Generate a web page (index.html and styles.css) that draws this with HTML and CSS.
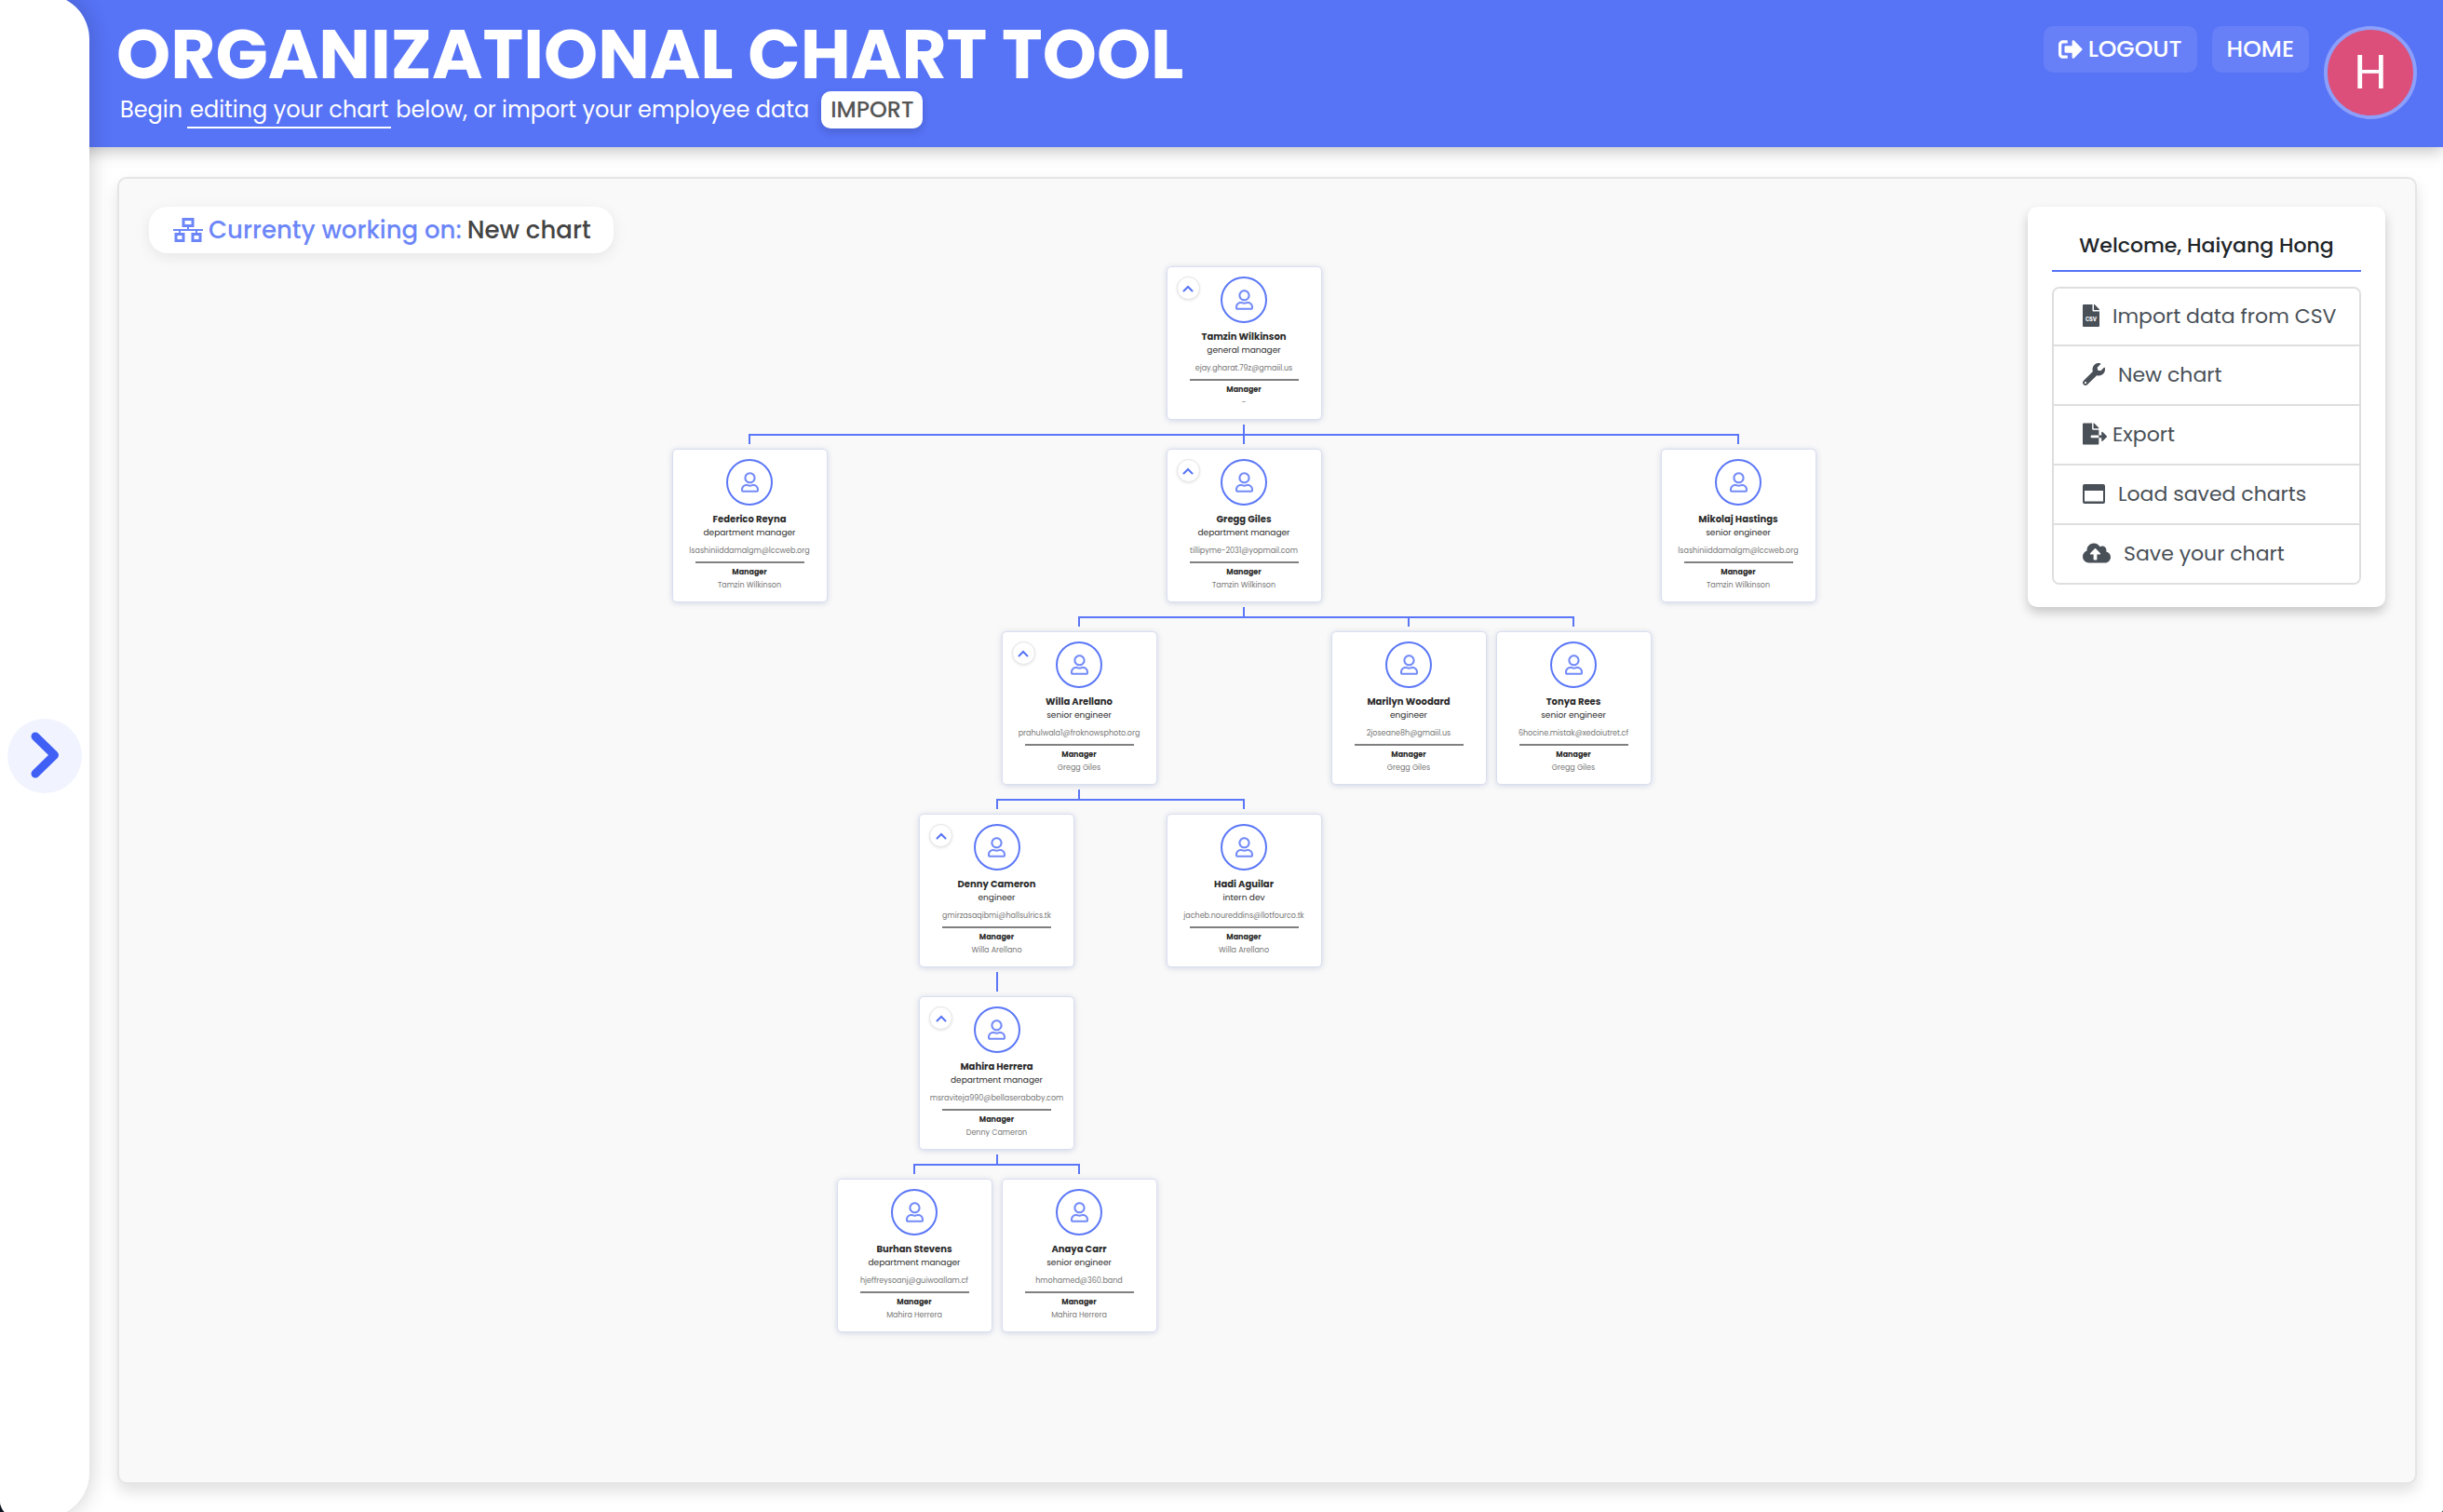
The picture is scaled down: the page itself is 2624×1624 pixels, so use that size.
FILE: index.html
```html
<!DOCTYPE html>
<html lang="en">
<head>
<meta charset="utf-8">
<meta name="viewport" content="width=device-width, initial-scale=1">
<title>Organizational Chart Tool</title>
<link rel="stylesheet" href="styles.css">
</head>
<body>
<svg class="sprite" aria-hidden="true">
  <symbol id="user" viewBox="0 0 448 512"><path d="M313.6 304c-28.7 0-42.5 16-89.6 16-47.1 0-60.8-16-89.6-16C60.2 304 0 364.2 0 438.4V464c0 26.5 21.5 48 48 48h352c26.5 0 48-21.5 48-48v-25.6c0-74.2-60.2-134.4-134.4-134.4zM400 464H48v-25.6c0-47.6 38.8-86.4 86.4-86.4 14.6 0 38.3 16 89.6 16 51.7 0 74.9-16 89.6-16 47.6 0 86.4 38.8 86.4 86.4V464zM224 288c79.5 0 144-64.5 144-144S303.5 0 224 0 80 64.5 80 144s64.5 144 144 144zm0-240c52.9 0 96 43.1 96 96s-43.1 96-96 96-96-43.1-96-96 43.1-96 96-96z"/></symbol>
  <symbol id="up" viewBox="0 0 12 8"><path d="M1.500 6.500 6 2l4.500 4.500" fill="none" stroke="currentColor" stroke-width="2" stroke-linecap="round"/></symbol>
</svg>
<div class="page">
  <aside class="sidebar">
    <button class="sidebar-toggle" type="button" aria-label="Open sidebar">
      <svg viewBox="0 0 30 50" width="30" height="50"><path d="M5 5 25.500 25 5 45" fill="none" stroke="currentColor" stroke-width="9" stroke-linecap="round" stroke-linejoin="round"/></svg>
    </button>
  </aside>

  <header class="header">
    <div class="heading">
      <h1>ORGANIZATIONAL CHART TOOL</h1>
      <p class="subtitle">Begin <a href="#chart" class="edit-link">editing your chart</a> below, or import your employee data <button type="button" class="import">IMPORT</button></p>
    </div>
    <nav class="nav">
      <a href="#logout" class="nav-link"><svg viewBox="0 0 512 512" width="26" height="26" fill="currentColor"><path d="M497 273L329 441c-15 15-41 4.500-41-17v-96H152c-13.300 0-24-10.700-24-24v-96c0-13.300 10.700-24 24-24h136V88c0-21.400 25.900-32 41-17l168 168c9.300 9.400 9.300 24.600 0 34zM192 436v-40c0-6.600-5.400-12-12-12H96c-17.700 0-32-14.300-32-32V160c0-17.700 14.300-32 32-32h84c6.600 0 12-5.400 12-12V76c0-6.600-5.400-12-12-12H96c-53 0-96 43-96 96v192c0 53 43 96 96 96h84c6.600 0 12-5.400 12-12z"/></svg>LOGOUT</a>
      <a href="#home" class="nav-link">HOME</a>
      <span class="avatar">H</span>
    </nav>
  </header>

  <main class="main">
    <section class="canvas" id="chart">
      <h2 class="current">
        <svg viewBox="0 0 32 26" width="32" height="26" fill="none" stroke="currentColor" stroke-width="3"><rect x="11" y="1.500" width="10" height="7"/><rect x="3" y="17.500" width="8" height="7"/><rect x="21" y="17.500" width="8" height="7"/><path d="M0 13h32M16 9v4M7 13v4M25 13v4" stroke-width="2"/></svg>
        <span>Currenty working on:</span> <strong>New chart</strong>
      </h2>

      <ul class="tree">
        <li>
          <article class="card"><button type="button" class="collapse" aria-label="Collapse"><svg><use href="#up"/></svg></button><span class="photo"><svg><use href="#user"/></svg></span><h3>Tamzin Wilkinson</h3><p class="role">general manager</p><p class="email">ejay.gharat.79z@gmaiil.us</p><hr><h4>Manager</h4><p class="boss">-</p></article>
          <ul>
            <li><article class="card"><span class="photo"><svg><use href="#user"/></svg></span><h3>Federico Reyna</h3><p class="role">department manager</p><p class="email">lsashiniiddamalgm@lccweb.org</p><hr><h4>Manager</h4><p class="boss">Tamzin Wilkinson</p></article></li>
            <li>
              <article class="card"><button type="button" class="collapse" aria-label="Collapse"><svg><use href="#up"/></svg></button><span class="photo"><svg><use href="#user"/></svg></span><h3>Gregg Giles</h3><p class="role">department manager</p><p class="email">tillipyme-2031@yopmail.com</p><hr><h4>Manager</h4><p class="boss">Tamzin Wilkinson</p></article>
              <ul>
                <li>
                  <article class="card"><button type="button" class="collapse" aria-label="Collapse"><svg><use href="#up"/></svg></button><span class="photo"><svg><use href="#user"/></svg></span><h3>Willa Arellano</h3><p class="role">senior engineer</p><p class="email">prahulwala1@froknowsphoto.org</p><hr><h4>Manager</h4><p class="boss">Gregg Giles</p></article>
                  <ul>
                    <li>
                      <article class="card"><button type="button" class="collapse" aria-label="Collapse"><svg><use href="#up"/></svg></button><span class="photo"><svg><use href="#user"/></svg></span><h3>Denny Cameron</h3><p class="role">engineer</p><p class="email">gmirzasaqibmi@hallsulrics.tk</p><hr><h4>Manager</h4><p class="boss">Willa Arellano</p></article>
                      <ul>
                        <li>
                          <article class="card"><button type="button" class="collapse" aria-label="Collapse"><svg><use href="#up"/></svg></button><span class="photo"><svg><use href="#user"/></svg></span><h3>Mahira Herrera</h3><p class="role">department manager</p><p class="email">msraviteja990@bellaserababy.com</p><hr><h4>Manager</h4><p class="boss">Denny Cameron</p></article>
                          <ul>
                            <li><article class="card"><span class="photo"><svg><use href="#user"/></svg></span><h3>Burhan Stevens</h3><p class="role">department manager</p><p class="email">hjeffreysoanj@guiwoallam.cf</p><hr><h4>Manager</h4><p class="boss">Mahira Herrera</p></article></li>
                            <li><article class="card"><span class="photo"><svg><use href="#user"/></svg></span><h3>Anaya Carr</h3><p class="role">senior engineer</p><p class="email">hmohamed@360.band</p><hr><h4>Manager</h4><p class="boss">Mahira Herrera</p></article></li>
                          </ul>
                        </li>
                      </ul>
                    </li>
                    <li><article class="card"><span class="photo"><svg><use href="#user"/></svg></span><h3>Hadi Aguilar</h3><p class="role">intern dev</p><p class="email">jacheb.noureddins@llotfourco.tk</p><hr><h4>Manager</h4><p class="boss">Willa Arellano</p></article></li>
                  </ul>
                </li>
                <li><article class="card"><span class="photo"><svg><use href="#user"/></svg></span><h3>Marilyn Woodard</h3><p class="role">engineer</p><p class="email">2joseane8h@gmaiil.us</p><hr><h4>Manager</h4><p class="boss">Gregg Giles</p></article></li>
                <li><article class="card"><span class="photo"><svg><use href="#user"/></svg></span><h3>Tonya Rees</h3><p class="role">senior engineer</p><p class="email">6hocine.mistak@xedoiutret.cf</p><hr><h4>Manager</h4><p class="boss">Gregg Giles</p></article></li>
              </ul>
            </li>
            <li><article class="card"><span class="photo"><svg><use href="#user"/></svg></span><h3>Mikolaj Hastings</h3><p class="role">senior engineer</p><p class="email">lsashiniiddamalgm@lccweb.org</p><hr><h4>Manager</h4><p class="boss">Tamzin Wilkinson</p></article></li>
          </ul>
        </li>
      </ul>

      <aside class="menu">
        <h2>Welcome, Haiyang Hong</h2>
        <div class="menu-list">
          <button type="button"><svg viewBox="0 0 384 512" width="18" height="24"><path fill="currentColor" d="M224 136V0H24C10.700 0 0 10.700 0 24v464c0 13.300 10.700 24 24 24h336c13.300 0 24-10.700 24-24V160H248c-13.200 0-24-10.800-24-24zM384 122v6H256V0h6c6 0 12 2.500 17 7l98 98c4.500 4.500 7 10.600 7 17z"/><text x="192" y="376" class="csv">CSV</text></svg>Import data from CSV</button>
          <button type="button"><svg viewBox="0 0 512 512" width="24" height="24" fill="currentColor"><path d="M507.730 109.100c-2.240-9.030-13.540-12.090-20.120-5.510l-74.360 74.360-67.880-11.310-11.310-67.880 74.360-74.360c6.620-6.620 3.430-17.900-5.660-20.160-47.380-11.740-99.550.91-136.580 37.930-39.640 39.640-50.550 97.100-34.050 147.200L18.740 402.760c-24.990 24.990-24.990 65.510 0 90.500 24.990 24.990 65.510 24.990 90.500 0l213.210-213.210c50.120 16.710 107.470 5.680 147.370-34.220 37.070-37.070 49.700-89.320 37.910-136.730zM64 472c-13.250 0-24-10.750-24-24 0-13.260 10.750-24 24-24s24 10.740 24 24c0 13.250-10.750 24-24 24z"/></svg>New chart</button>
          <button type="button" class="tight"><svg viewBox="0 0 576 512" width="26" height="24" fill="currentColor"><path d="M384 121.900c0-6.300-2.500-12.400-7-16.900L279.100 7c-4.500-4.500-10.600-7-17-7H256v128h128zM571 308l-95.700-96.400c-10.100-10.100-27.400-3-27.400 11.300V288h-64v64h64v65.200c0 14.300 17.300 21.400 27.400 11.300L571 332c6.600-6.600 6.600-17.400 0-24zm-379 28v-32c0-8.800 7.200-16 16-16h176V160H248c-13.200 0-24-10.800-24-24V0H24C10.700 0 0 10.700 0 24v464c0 13.300 10.700 24 24 24h336c13.300 0 24-10.700 24-24V352H208c-8.800 0-16-7.200-16-16z"/></svg>Export</button>
          <button type="button"><svg viewBox="0 0 24 24" width="24" height="24" fill="currentColor"><path fill-rule="evenodd" d="M2 2h20a2 2 0 0 1 2 2v17a2 2 0 0 1-2 2H2a2 2 0 0 1-2-2V4a2 2 0 0 1 2-2zM2 9v11.500h20V9z"/></svg>Load saved charts</button>
          <button type="button"><svg viewBox="0 0 640 512" width="30" height="24" fill="currentColor"><path d="M537.600 226.600c4.100-10.700 6.400-22.400 6.400-34.600 0-53-43-96-96-96-19.700 0-38.100 6-53.300 16.200C367 64.200 315.300 32 256 32c-88.400 0-160 71.600-160 160 0 2.700.1 5.400.2 8.100C40.200 219.800 0 273.200 0 336c0 79.500 64.500 144 144 144h368c70.700 0 128-57.300 128-128 0-61.900-44-113.600-102.400-125.400zM393.400 288H328v112c0 8.800-7.200 16-16 16h-48c-8.800 0-16-7.200-16-16V288h-65.400c-14.300 0-21.400-17.200-11.300-27.400l105.400-105.400c6.200-6.200 16.400-6.200 22.600 0l105.400 105.400c10.100 10.100 2.900 27.400-11.300 27.400z"/></svg>Save your chart</button>
        </div>
      </aside>
    </section>
  </main>
</div>
</body>
</html>
```
FILE: styles.css
```css
:root {
  --blue: #5773f6;
  --line: #5b77f7;
}

* {
  box-sizing: border-box;
}

body {
  margin: 0;
  background: #0d1420;
  color: #212529;
  font-family: Poppins, Inter, sans-serif;
}

h1, h2, h3, h4, p, ul {
  margin: 0;
  padding: 0;
}

button {
  font: inherit;
  border: 0;
  cursor: pointer;
}

a {
  color: inherit;
  text-decoration: none;
}

.sprite {
  display: none;
}

.page {
  display: flex;
  flex-direction: column;
  min-height: 100vh;
  background: #fff;
  border-radius: 0 0 2px 12px;
  overflow: hidden;
}

/* Collapsed drawer over the left edge */
.sidebar {
  position: fixed;
  inset: -6px auto -6px 0;
  z-index: 2;
  display: flex;
  align-items: center;
  justify-content: center;
  width: 96px;
  background: #fff;
  border-radius: 0 48px 48px 18px;
  box-shadow: 0 0 24px rgba(0, 0, 0, 0.2);
}

.sidebar-toggle {
  display: grid;
  place-items: center;
  width: 80px;
  height: 80px;
  padding: 0 0 3px;
  border-radius: 50%;
  background: #f1f4fe;
  color: #405ff5;
}

/* Header */
.header {
  display: flex;
  justify-content: space-between;
  gap: 32px;
  min-height: 158px;
  padding: 28px 28px 20px 125px;
  background: var(--blue);
  color: #fff;
  box-shadow: 0 4px 16px rgba(0, 0, 0, 0.25);
}

.heading h1 {
  font-size: 74px;
  line-height: 60px;
  font-weight: 700;
}

.subtitle {
  display: flex;
  align-items: center;
  gap: 5px;
  margin-top: 10px;
  padding-left: 4px;
  font-size: 24px;
  line-height: 36px;
}

.edit-link {
  padding: 2px 3px 0;
  border-bottom: 2px solid #fff;
}

.import {
  height: 40px;
  margin-left: 8px;
  padding: 0 10px;
  border-radius: 10px;
  background: #fff;
  color: #555;
  font-weight: 500;
  box-shadow: 0 4px 8px rgba(0, 0, 0, 0.15);
}

.nav {
  display: flex;
  align-items: flex-start;
  gap: 16px;
}

.nav-link {
  display: flex;
  align-items: center;
  gap: 6px;
  height: 50px;
  padding: 0 16px;
  border-radius: 10px;
  background: #6780f8;
  font-size: 25px;
  font-weight: 500;
}

.avatar {
  display: grid;
  place-items: center;
  width: 100px;
  height: 100px;
  border: 4px solid #8b9ffb;
  border-radius: 50%;
  background: #dc4f7a;
  font: 50px Roboto, sans-serif;
}

/* Work area */
.main {
  display: flex;
  flex: 1;
  padding: 32px 28px 30px 126px;
}

.canvas {
  flex: 1;
  display: grid;
  align-items: start;
  padding: 30px 32px;
  border: 2px solid #e5e5e5;
  border-radius: 10px;
  background: #f9f9f9;
  box-shadow: 0 8px 16px rgba(0, 0, 0, 0.12);
}

.canvas > * {
  grid-area: 1 / 1;
}

.current {
  justify-self: start;
  display: flex;
  align-items: center;
  gap: 6px;
  height: 50px;
  padding: 0 24px 0 26px;
  border-radius: 20px;
  background: #fff;
  color: #6c86f8;
  font-size: 26px;
  font-weight: 500;
  box-shadow: 0 4px 16px rgba(0, 0, 0, 0.08);
}

.current strong {
  color: #444;
  font-weight: 500;
}

/* Account menu */
.menu {
  justify-self: end;
  width: 384px;
  padding: 24px 26px;
  border-radius: 10px;
  background: #fff;
  box-shadow: 0 6px 12px rgba(0, 0, 0, 0.2);
}

.menu h2 {
  margin-bottom: 16px;
  padding-bottom: 8px;
  border-bottom: 2px solid var(--blue);
  font-size: 22px;
  line-height: 36px;
  font-weight: 500;
  text-align: center;
}

.menu-list {
  display: flex;
  flex-direction: column;
  border: 2px solid #dedede;
  border-radius: 8px;
  overflow: hidden;
}

.menu-list button {
  display: flex;
  align-items: center;
  gap: 14px;
  height: 64px;
  padding: 0 16px 2px 31px;
  border-top: 2px solid #dedede;
  background: #fff;
  color: #495057;
  font-size: 22px;
  white-space: nowrap;
}

.menu-list button:first-child {
  height: 60px;
  border-top: 0;
}

.menu-list .tight {
  gap: 6px;
}

.menu-list svg {
  flex: none;
}

.csv {
  fill: #fff;
  font: 800 120px Inter, sans-serif;
  text-anchor: middle;
}

/* Organization tree */
.tree,
.tree ul {
  display: flex;
  justify-content: center;
  list-style: none;
}

.tree {
  justify-self: center;
  padding: 64px 50px 0 0;
}

.tree li {
  position: relative;
  display: flex;
  flex-direction: column;
  align-items: center;
}

.tree ul {
  position: relative;
  padding-top: 15px;
}

.tree ul > li {
  padding-top: 16px;
}

.tree ul::before,
.tree ul > li::before,
.tree ul > li::after {
  content: "";
  position: absolute;
  background: var(--line);
}

.tree ul::before {
  top: 5px;
  left: calc(50% - 1px);
  width: 2px;
  height: 11px;
}

.tree ul > li::before {
  top: 0;
  left: calc(50% - 1px);
  width: 2px;
  height: 11px;
}

.tree ul > li::after {
  top: 0;
  left: 0;
  right: 0;
  height: 2px;
}

.tree ul > li:first-child::after {
  left: calc(50% - 1px);
}

.tree ul > li:last-child::after {
  right: calc(50% - 1px);
}

.tree ul > li:only-child::after {
  display: none;
}

.card {
  position: relative;
  display: flex;
  flex-direction: column;
  align-items: center;
  width: 167px;
  height: 165px;
  margin: 0 5px;
  padding-top: 10px;
  border: 1px solid #d9dff0;
  border-radius: 5px;
  background: #fff;
  color: #2b2b2b;
  line-height: 14px;
  box-shadow: 0 1px 6px rgba(70, 90, 160, 0.22);
  white-space: nowrap;
}

.photo {
  display: grid;
  place-items: center;
  width: 50px;
  height: 50px;
  margin-bottom: 8px;
  border: 2px solid var(--line);
  border-radius: 50%;
}

.photo svg {
  width: 19px;
  height: 22px;
  fill: #738bf8;
}

.collapse {
  position: absolute;
  top: 10px;
  left: 10px;
  display: grid;
  place-items: center;
  width: 25px;
  height: 25px;
  padding: 0;
  border: 1px solid #e5e5e5;
  border-radius: 50%;
  background: #fff;
  color: var(--blue);
  box-shadow: 0 1px 3px rgba(0, 0, 0, 0.1);
}

.collapse svg {
  width: 12px;
  height: 8px;
}

.card h3 {
  font-size: 10px;
  font-weight: 700;
}

.role {
  font-size: 9px;
}

.email,
.boss {
  color: #777;
  font-size: 8px;
}

.email {
  margin-top: 6px;
}

.card hr {
  width: 117px;
  height: 2px;
  margin: 4px 0 3px;
  border: 0;
  background: #808080;
}

.card h4 {
  font-size: 8px;
  font-weight: 700;
}
```
